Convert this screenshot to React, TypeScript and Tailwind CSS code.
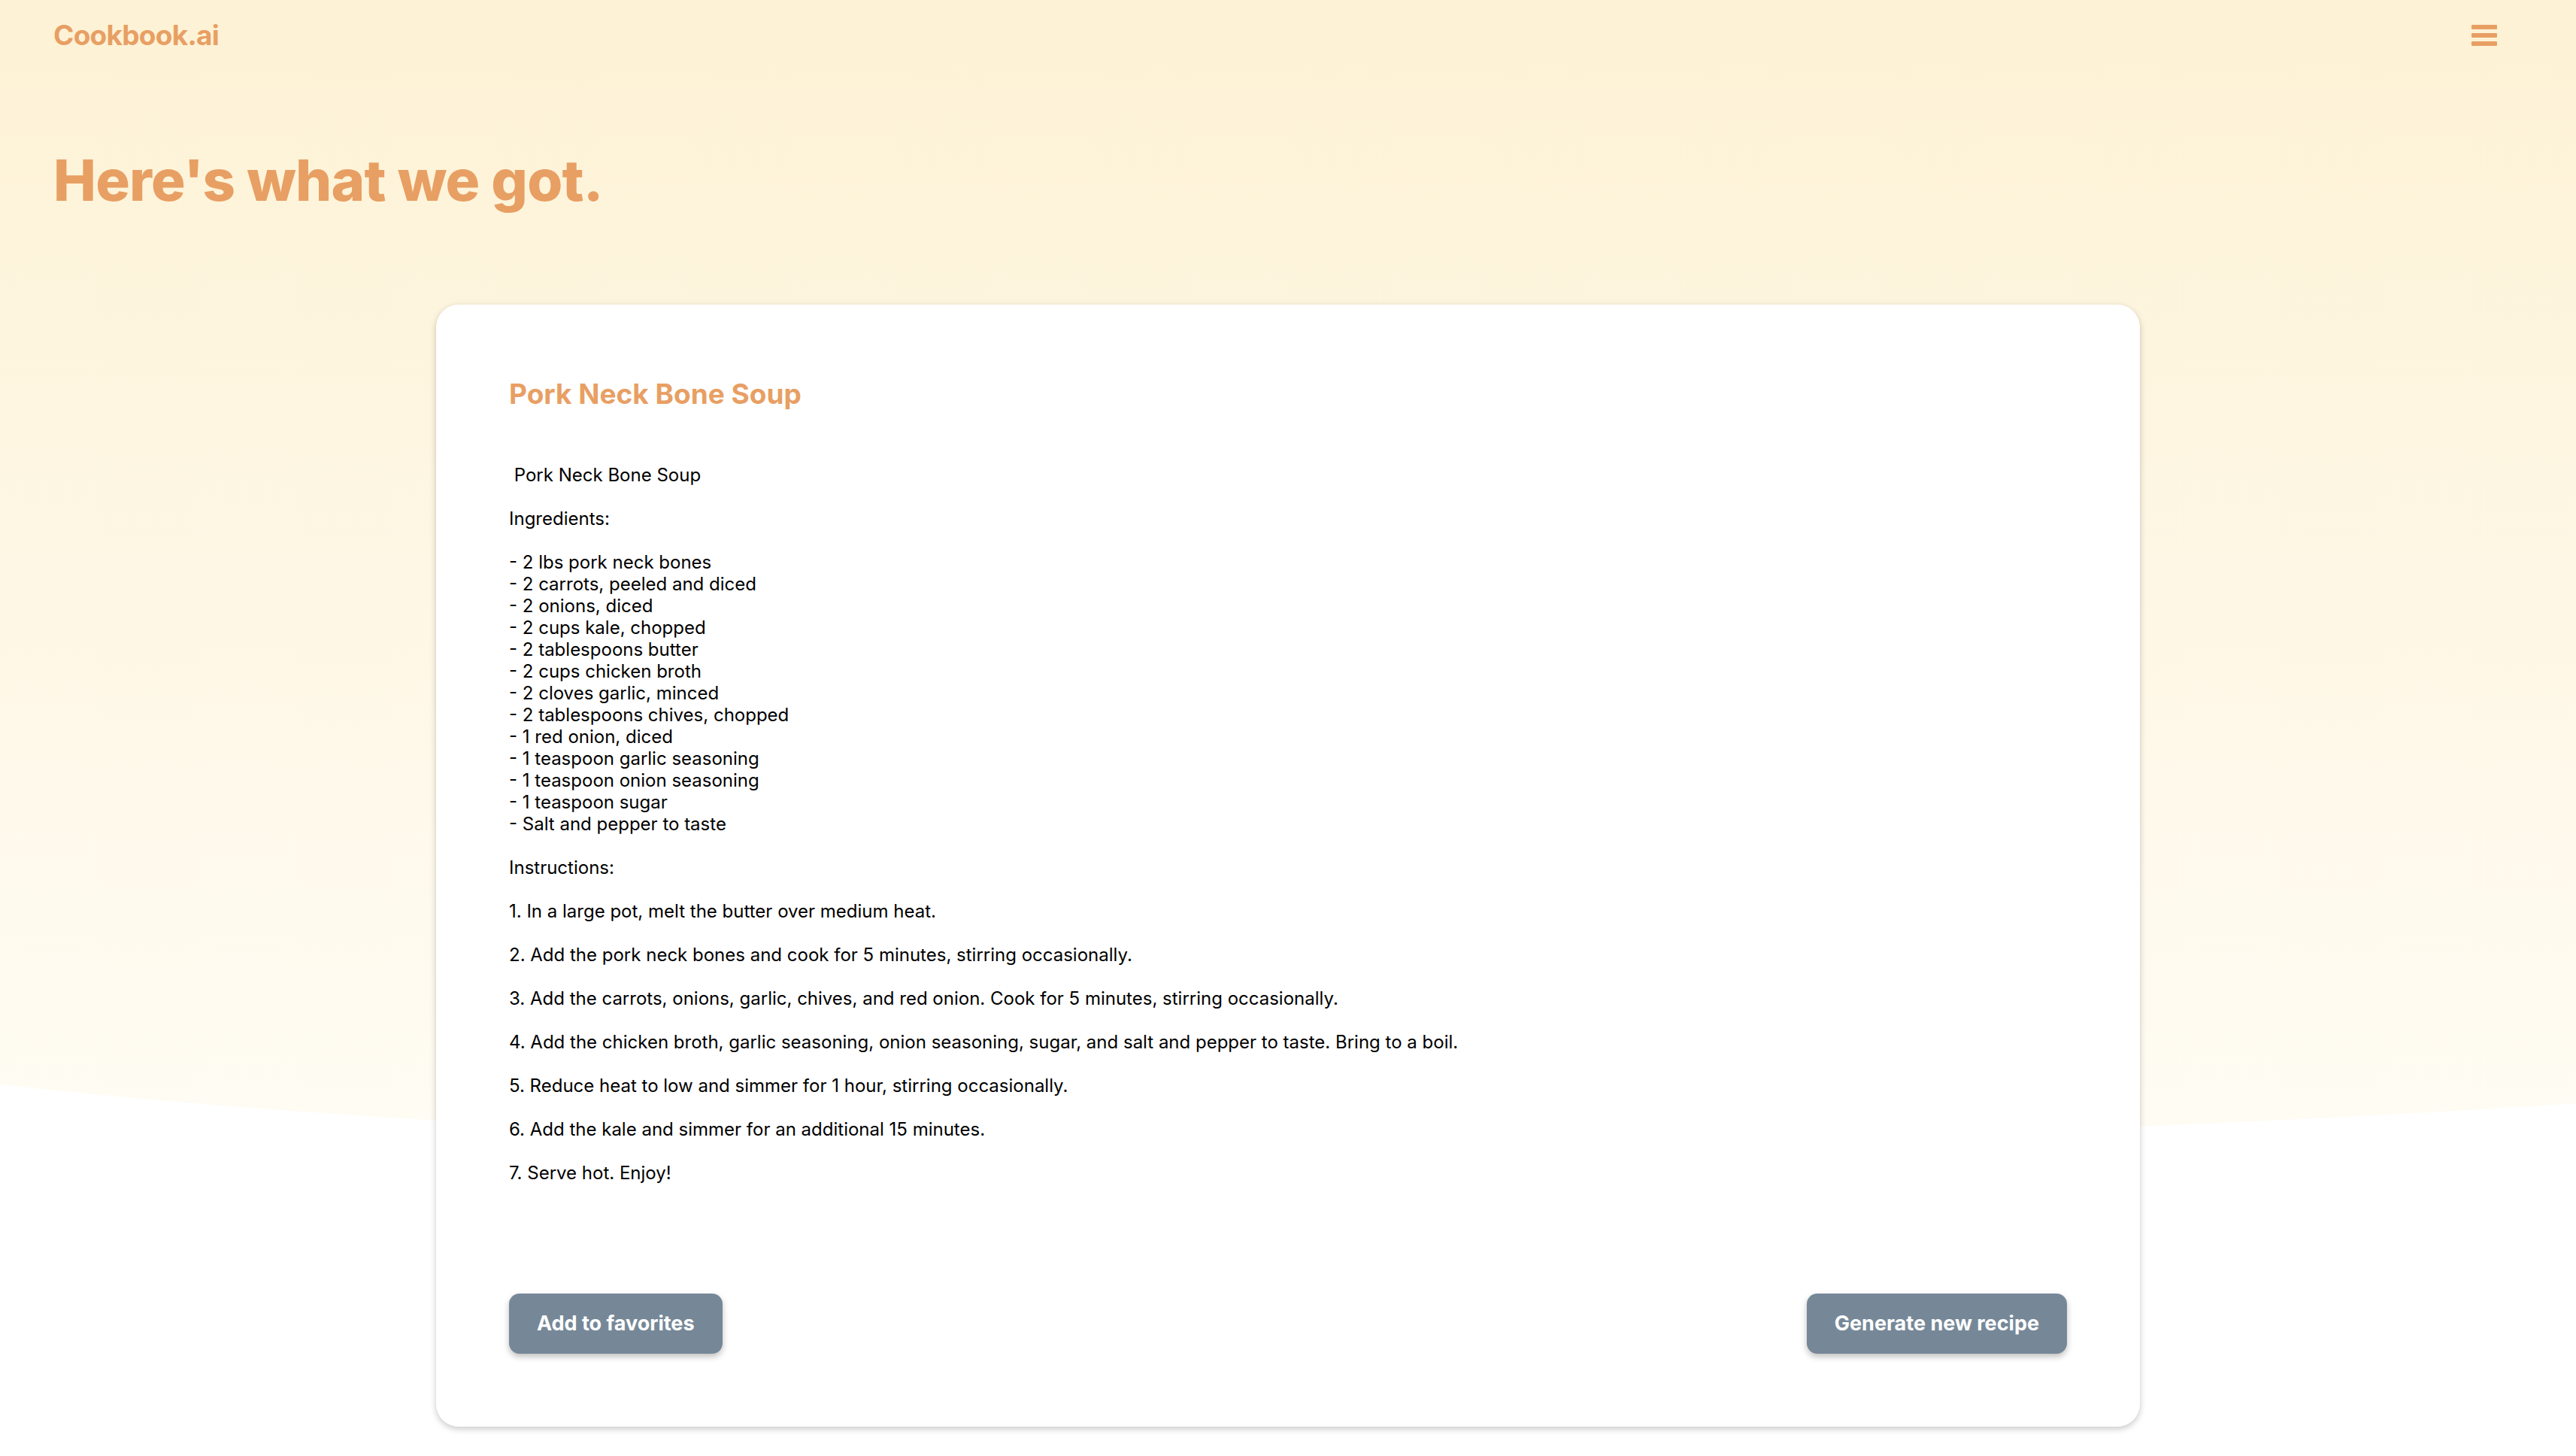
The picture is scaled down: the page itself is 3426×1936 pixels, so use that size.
import { useState } from 'react';

const recipe = ` Pork Neck Bone Soup

Ingredients:

- 2 lbs pork neck bones
- 2 carrots, peeled and diced
- 2 onions, diced
- 2 cups kale, chopped
- 2 tablespoons butter
- 2 cups chicken broth
- 2 cloves garlic, minced
- 2 tablespoons chives, chopped
- 1 red onion, diced
- 1 teaspoon garlic seasoning
- 1 teaspoon onion seasoning
- 1 teaspoon sugar
- Salt and pepper to taste

Instructions:

1. In a large pot, melt the butter over medium heat.

2. Add the pork neck bones and cook for 5 minutes, stirring occasionally.

3. Add the carrots, onions, garlic, chives, and red onion. Cook for 5 minutes, stirring occasionally.

4. Add the chicken broth, garlic seasoning, onion seasoning, sugar, and salt and pepper to taste. Bring to a boil.

5. Reduce heat to low and simmer for 1 hour, stirring occasionally.

6. Add the kale and simmer for an additional 15 minutes.

7. Serve hot. Enjoy!`;

function Backdrop() {
  return (
    <svg
      className="absolute top-0 left-0 w-full h-[1560px] pointer-events-none"
      viewBox="0 0 3426 1560"
      preserveAspectRatio="none"
    >
      <defs>
        <linearGradient id="bg" x1="0" y1="0" x2="0" y2="1">
          <stop offset="0" stopColor="#fdf2d5" />
          <stop offset="1" stopColor="#fffcf4" />
        </linearGradient>
      </defs>
      <path d="M0,0 H3426 V1467 C2400,1534 1000,1552 0,1442 Z" fill="url(#bg)" />
    </svg>
  );
}

export default function App() {
  const [menuOpen, setMenuOpen] = useState(false);

  return (
    <div className="relative min-h-[1936px] bg-white pb-[40px] font-['Inter','Liberation_Sans',sans-serif]">
      <Backdrop />

      <div className="relative">
        <header className="flex justify-between items-center h-[93px] pl-[71px] pr-[105px]">
          <span className="text-[37px] font-bold tracking-[-0.02em] leading-[normal] text-[#e89f63]">Cookbook.ai</span>
          <button onClick={() => setMenuOpen(!menuOpen)} className="flex flex-col gap-[5px]" aria-label="Menu">
            <span className="block w-[34px] h-[6px] rounded-[1px] bg-[#e89f63]"></span>
            <span className="block w-[34px] h-[6px] rounded-[1px] bg-[#e89f63]"></span>
            <span className="block w-[34px] h-[6px] rounded-[1px] bg-[#e89f63]"></span>
          </button>
        </header>

        <h1 className="mt-[100px] pl-[71px] text-[76px] font-extrabold tracking-[-0.01em] leading-[normal] text-[#e89f63]">
          Here's what we got.
        </h1>

        <div className="mt-[120px] mx-auto w-[2266px] bg-white rounded-[30px] shadow-[0_3px_8px_rgba(0,0,0,0.22)] px-[97px] pt-[95px] pb-[97px]">
          <h2 className="text-[37px] font-bold leading-[normal] text-[#e89f63] pt-[1px]">Pork Neck Bone Soup</h2>

          <div className="mt-[71px] whitespace-pre-wrap text-[24px] leading-[normal] text-black">{recipe}</div>

          <div className="mt-[146px] flex justify-between">
            <button className="h-[80px] px-[37px] rounded-[14px] bg-[#768898] text-white text-[27px] font-bold shadow-[0_4px_8px_rgba(0,0,0,0.25)]">
              Add to favorites
            </button>
            <button className="h-[80px] px-[37px] rounded-[14px] bg-[#768898] text-white text-[27px] font-bold shadow-[0_4px_8px_rgba(0,0,0,0.25)]">
              Generate new recipe
            </button>
          </div>
        </div>
      </div>
    </div>
  );
}
